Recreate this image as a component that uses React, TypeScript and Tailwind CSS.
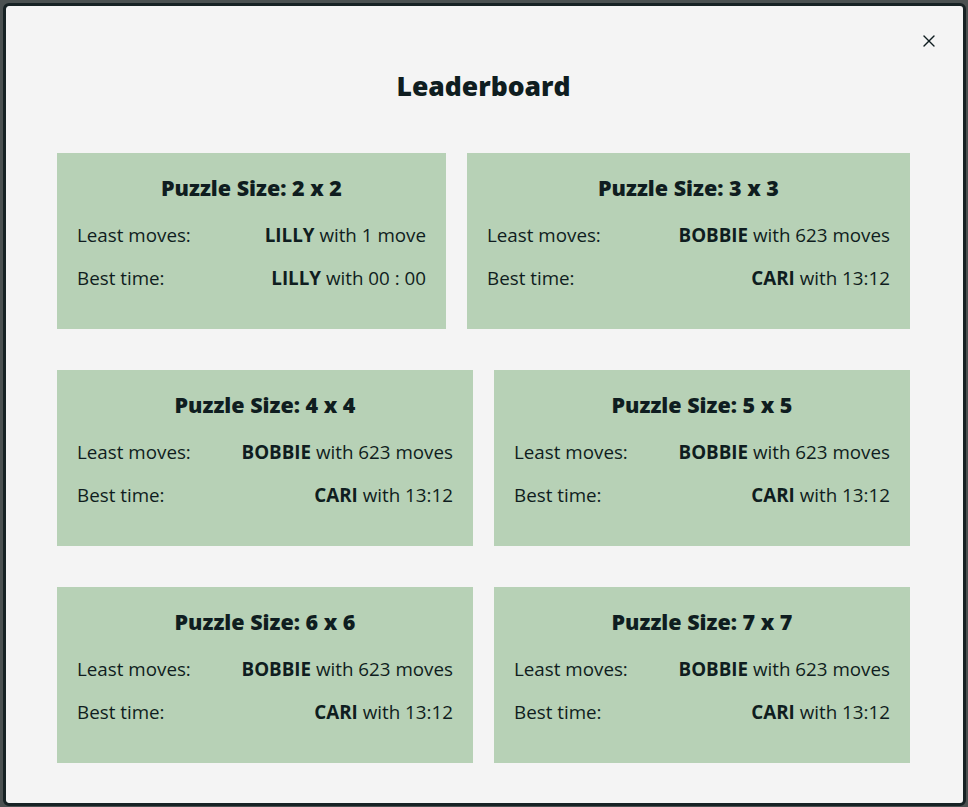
import { X } from "lucide-react"

type Entry = { size: number; moves: [string, string]; time: [string, string] }

const rows: { entries: Entry[]; widths: string[] }[] = [
  {
    entries: [
      { size: 2, moves: ["LILLY", "with 1 move"], time: ["LILLY", "with 00 : 00"] },
      { size: 3, moves: ["BOBBIE", "with 623 moves"], time: ["CARI", "with 13:12"] },
    ],
    widths: ["w-[389px]", "flex-1"],
  },
  {
    entries: [
      { size: 4, moves: ["BOBBIE", "with 623 moves"], time: ["CARI", "with 13:12"] },
      { size: 5, moves: ["BOBBIE", "with 623 moves"], time: ["CARI", "with 13:12"] },
    ],
    widths: ["flex-1", "flex-1"],
  },
  {
    entries: [
      { size: 6, moves: ["BOBBIE", "with 623 moves"], time: ["CARI", "with 13:12"] },
      { size: 7, moves: ["BOBBIE", "with 623 moves"], time: ["CARI", "with 13:12"] },
    ],
    widths: ["flex-1", "flex-1"],
  },
]

function Card({ entry, width }: { entry: Entry; width: string }) {
  return (
    <div className={`${width} bg-[#b7d1b6] px-5 pt-[21px] pb-[39px]`}>
      <h3 className="text-center text-[21.5px] leading-[28px] font-extrabold">
        Puzzle Size: {entry.size} x {entry.size}
      </h3>
      <div className="mt-[21px] flex justify-between text-[18.8px] leading-[24px]">
        <span>Least moves:</span>
        <span>
          <b className="font-bold">{entry.moves[0]}</b> {entry.moves[1]}
        </span>
      </div>
      <div className="mt-[19px] flex justify-between text-[18.8px] leading-[24px]">
        <span>Best time:</span>
        <span>
          <b className="font-bold">{entry.time[0]}</b> {entry.time[1]}
        </span>
      </div>
    </div>
  )
}

export default function App() {
  return (
    <div className="w-[968px] h-[807px] bg-[#4b5151] pt-[3px] pl-[3px] font-['Open_Sans',sans-serif] text-[#0f1d20]">
      <div className="relative w-[963px] h-[803px] rounded-md border-[3px] border-[#172224] bg-[#f4f4f4] pt-[64px] pl-[51px] pr-[53px]">
        <button className="absolute top-[25px] right-[24px] text-[#0f1d20]">
          <X size={20} strokeWidth={1.6} />
        </button>
        <h2 className="text-center text-[26.5px] leading-[32px] font-extrabold">Leaderboard</h2>
        <div className="mt-[51px] flex flex-col gap-[41px]">
          {rows.map((row, i) => (
            <div key={i} className="flex gap-[21px]">
              {row.entries.map((e, j) => (
                <Card key={e.size} entry={e} width={row.widths[j]} />
              ))}
            </div>
          ))}
        </div>
      </div>
    </div>
  )
}
